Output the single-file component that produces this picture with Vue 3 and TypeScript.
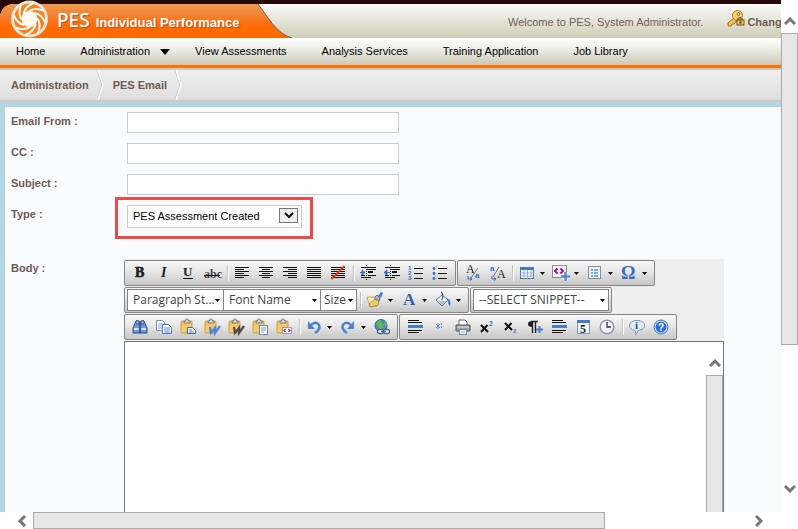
<script setup lang="ts">
import { ref } from 'vue'

interface Tool { icon?: string; label?: string; menu?: boolean; sep?: boolean }

const nav = [
  { label: 'Home' },
  { label: 'Administration', menu: true },
  { label: 'View Assessments' },
  { label: 'Analysis Services' },
  { label: 'Training Application' },
  { label: 'Job Library' },
]
const crumbs = ['Administration', 'PES Email']
const fields = [
  { id: 'from', label: 'Email From :' },
  { id: 'cc', label: 'CC :' },
  { id: 'subject', label: 'Subject :' },
]
const values = ref<Record<string, string>>({ from: '', cc: '', subject: '' })
const type = ref('PES Assessment Created')
const rays = [0, 45, 90, 135, 180, 225, 270, 315]

/* Draws a stack of horizontal rules, each given as [x, y, width]. */
const rules = (rows: number[][], fill = '#111') =>
  rows.map(([x, y, w]) => `<rect x="${x}" y="${y}" width="${w}" height="1" fill="${fill}" shape-rendering="crispEdges"/>`).join('')

const full = rules([2, 4, 6, 8, 10, 12].map(y => [1, y, 14]))
const clip = '<rect x="1" y="2" width="11" height="12" rx="1" fill="#f3c76c" stroke="#c99a45"/><path d="M4 4V2h1.500a1 1.500 0 0 1 3 0H10v2z" fill="#d8d8d8" stroke="#666" stroke-width=".8"/>'
const outline = '<path d="M6.500 0v15" stroke="#111" stroke-dasharray="1 1"/>' + rules([[1, 2, 15], [7, 4, 9], [1, 10, 4], [8, 10, 8], [1, 12, 10]]) + '<rect x="8" y="6" width="5" height="2" fill="#111"/>'
const glyph = (t: string, x: number, y: number, size: number, extra = '') =>
  `<text x="${x}" y="${y}" font-family="Liberation Serif, serif" font-size="${size}" fill="#1c1c24" ${extra}>${t}</text>`

const icons: Record<string, string> = {
  bold: glyph('B', 3, 12, 14, 'font-weight="bold" stroke="#1c1c24" stroke-width=".6"'),
  italic: glyph('I', 5, 12, 14, 'font-style="italic" font-weight="bold"'),
  underline: glyph('U', 3, 11, 13, 'font-weight="bold"') + rules([[3, 13, 10]]),
  strike: glyph('abc', 0, 13, 12, 'font-weight="bold" fill-opacity=".8"') + rules([[0, 10, 16]]),
  left: rules([[1, 2, 14], [1, 4, 9], [1, 6, 14], [1, 8, 9], [1, 10, 14], [1, 12, 9]]),
  center: rules([[1, 2, 14], [4, 4, 8], [1, 6, 14], [4, 8, 8], [1, 10, 14], [4, 12, 8]]),
  right: rules([[1, 2, 14], [6, 4, 9], [1, 6, 14], [6, 8, 9], [1, 10, 14], [6, 12, 9]]),
  justify: full,
  nojustify: full + '<path d="M1.500 14L14.500 1" stroke="#ee3311" stroke-width="1.800"/>',
  indent: outline + '<path d="M0 7.500h3M2 5l3 2.500L2 10z" fill="#3d6fc8" stroke="#3d6fc8"/>',
  outdent: outline + '<path d="M3 7.500h3M3 5L0 7.500 3 10z" fill="#3d6fc8" stroke="#3d6fc8"/>',
  numbers: rules([[6, 3, 9], [6, 8, 9], [6, 13, 9]]) + '<g font-family="Liberation Sans, sans-serif" font-size="6" font-weight="bold" fill="#3d6fc8"><text x="0" y="5">1</text><text x="0" y="10">2</text><text x="0" y="15">3</text></g>',
  bullets: rules([[6, 3, 9], [6, 8, 9], [6, 13, 9]]) + '<g fill="#3d6fc8"><circle cx="2" cy="3.500" r="1.400"/><circle cx="2" cy="8.500" r="1.400"/><circle cx="2" cy="13.500" r="1.400"/></g>',
  lower: glyph('A', 1, 8, 12) + '<text x="10" y="13" font-family="Liberation Sans, sans-serif" font-size="8" font-weight="bold" fill="#3d6fc8">a</text><path d="M13 3L6 13" stroke="#777"/><path d="M3 11v3h4M5 12.500L7 14l-2 1.500" fill="none" stroke="#3d6fc8"/>',
  upper: glyph('A', 8, 13, 12) + '<text x="1" y="6" font-family="Liberation Sans, sans-serif" font-size="8" font-weight="bold" fill="#3d6fc8">a</text><path d="M10 2L4 12" stroke="#777"/><path d="M3 11v3h4M5 12.500L7 14l-2 1.500" fill="none" stroke="#3d6fc8"/>',
  table: '<rect x="1.500" y="2.500" width="13" height="11" fill="#fff" stroke="#4c6ea8"/><rect x="1" y="2" width="14" height="3" fill="#4779c9"/><path d="M5 5v9M8.500 5v9M12 5v9M1 8h14M1 11h14" stroke="#8fb0e4"/>',
  snippet: '<rect x="-.5" y=".5" width="14" height="12" fill="#f4f4f8" stroke="#333" stroke-dasharray="1 1"/><path d="M4.500 3.500L2 6l2.500 2.500M7.500 3.500L10 6 7.500 8.500" fill="none" stroke="#a0148c" stroke-width="2"/><path d="M12.500 7v9M8 11.500h9" stroke="#fff" stroke-width="4"/><path d="M12.500 7v9M8 11.500h9" stroke="#5584d0" stroke-width="2.500"/>',
  template: '<rect x="1.500" y="1.500" width="12" height="12" fill="#eef2f9" stroke="#333" stroke-dasharray="1 1"/><path d="M4 5h2M4 8h2M4 11h2M7 5h4M7 8h4M7 11h4" stroke="#5292dc" stroke-width="1.500"/>',
  omega: '<text x="0" y="14" font-family="Liberation Serif, serif" font-size="18" font-weight="bold" fill="#3b6db5">Ω</text>',
  brush: '<path d="M0 5h7l6 2-3 7-7 1z" fill="#fff3b0" stroke="#c7a74f"/><path d="M2 12l2 3 7-2 1-5-4-1z" fill="#f4cf62" stroke="#777" stroke-width=".7"/><path d="M8 5l2-2 3 3-1 3-4-2z" fill="#a9b4c8" stroke="#59647a" stroke-width=".8"/><path d="M11 4l3-4 2 1-2 5z" fill="#4a78c8"/>',
  fore: '<text x="2" y="13" font-family="Liberation Serif, serif" font-size="17" font-weight="bold" fill="#365f9f">A</text>',
  bucket: '<path d="M1 8l6-5 6 5-6 6z" fill="#f4f7fc" stroke="#587aaa"/><path d="M6 0q3 2 1 8" fill="none" stroke="#555" stroke-width="1.200"/><path d="M3 9h9l-5 4z" fill="#a9bfdf"/><path d="M11 6q6 1 4 8-2-1-2-5z" fill="#3978cc"/>',
  find: '<path d="M4 2h3l1 4v8H1V9zM9 2h3l3 7v5H8V6z" fill="#6b9be0" stroke="#274a84"/><path d="M4 2h3v3H4zM9 2h3v3H9z" fill="#c8dcf5" stroke="#274a84"/><path d="M2 10h4.500M9.500 10H14" stroke="#dceafc" stroke-width="2"/>',
  copy: '<path d="M.5 1.500h6l2 2v8h-8z" fill="#fff" stroke="#6a91cc"/><path d="M2 5h5M2 7h5M2 9h5" stroke="#83a6dd"/><path d="M6.500 5.500h6l3 3v6h-9z" fill="#fff" stroke="#4d79bd"/><path d="M8 9h6M8 11h6M8 13h6" stroke="#5787d0"/>',
  paste: clip + '<path d="M7.500 8.500h5l3 3v3h-8z" fill="#e8f1ff" stroke="#566985"/><path d="M9 11h3M9 13h5" stroke="#6e91c8"/>',
  pasteword: clip + '<path d="M6 8l1 6 4-5 0 5 5-7" fill="none" stroke="#4f86dd" stroke-width="2.200"/>',
  pasteclean: clip + '<path d="M6 8l1 6 4-5 0 5 5-7" fill="none" stroke="#4a4a48" stroke-width="2.200"/>',
  pastetext: clip + '<rect x="7.500" y="6.500" width="8" height="9" fill="#fff" stroke="#6888ba"/><path d="M9 9h5M9 11h5M9 13h3" stroke="#7598d3"/>',
  pastehtml: clip + '<rect x="6.500" y="8.500" width="9" height="6" fill="#fff" stroke="#555" stroke-dasharray="1 1"/><path d="M9.500 10L8 11.500 9.500 13M12.500 10l1.500 1.500-1.500 1.500" fill="none" stroke="#b2209d" stroke-width="1.300"/>',
  undo: '<path d="M4 7q6-6 9-1 2 4-4 8" fill="none" stroke="#4d84d1" stroke-width="2.500"/><path d="M2 2v8h7z" fill="#4d84d1"/>',
  redo: '<path d="M12 7Q6 1 3 6q-2 4 4 8" fill="none" stroke="#4d84d1" stroke-width="2.500"/><path d="M14 2v8H7z" fill="#4d84d1"/>',
  globe: '<circle cx="7" cy="6.500" r="6" fill="#4c88cf" stroke="#346398"/><path d="M3 3q3-3 5-2l-1 3 3 2-2 4-3 1-1-4-2-1z" fill="#5fb854"/><path d="M11 2l2 3-1 3-2-2z" fill="#5fb854"/><rect x="3.500" y="10.500" width="6" height="4" rx="2" fill="#fff" stroke="#4b6078" stroke-width="1.300"/><rect x="9.500" y="10.500" width="6" height="4" rx="2" fill="#fff" stroke="#4b6078" stroke-width="1.300"/><path d="M7 12.500h5" stroke="#4b6078"/>',
  hr: rules([[1, 1, 11], [1, 3, 14], [1, 11, 14], [1, 13, 11]]) + '<rect x="1" y="6" width="15" height="3" fill="#4c7ed0"/>',
  star: '<path d="M7 4v6M5 5l4 4M9 5L5 9" stroke="#5689d8"/><path d="M10 5h1M10 8h1" stroke="#333"/>',
  print: '<path d="M4 7V1h6l2 2v4z" fill="#fff" stroke="#666"/><path d="M1 6h14v6H1z" fill="#9b9fa8" stroke="#555"/><path d="M2 8h12" stroke="#e4e7ec"/><rect x="4.500" y="10.500" width="7" height="5" fill="#fff" stroke="#6f86ad"/><path d="M6 13h4" stroke="#70a2de"/>',
  sup: '<path d="M2 6l7 7M8.500 6L2 13" stroke="#111" stroke-width="2"/><text x="10" y="7" font-family="Liberation Sans, sans-serif" font-size="7" font-weight="bold" fill="#3d6fc8">2</text>',
  sub: '<path d="M2 4l7 7M8.500 4L2 11" stroke="#111" stroke-width="2"/><text x="10" y="14" font-family="Liberation Sans, sans-serif" font-size="6" font-weight="bold" fill="#3d6fc8">2</text>',
  para: '<path d="M5 2q-4 0-4 3t4 3z" fill="#222"/><path d="M5.500 2v12M8.500 2v12M4 2.500h7" stroke="#222" stroke-width="1.400"/><path d="M12.500 7v7M9 10.500h7" stroke="#4c7ed0" stroke-width="2"/>',
  date: '<rect x="2.500" y="1.500" width="12" height="13" fill="#f3f5fa" stroke="#8198bf"/><rect x="2" y="1" width="13" height="3" fill="#4779c9"/><text x="5" y="14" font-family="Liberation Serif, serif" font-size="12" font-weight="bold" fill="#222">5</text>',
  time: '<circle cx="8" cy="8" r="6.800" fill="#eef4fd" stroke="#8e99ab" stroke-width="1.500"/><path d="M8 3v5h4" fill="none" stroke="#333" stroke-width="1.300"/>',
  info: '<path d="M8 1.500c10 0 10 9 1 10l-2 4-1-4c-8-1-7-10 2-10z" fill="#e3ecf8" stroke="#7d93b3"/><text x="6" y="10" font-family="Liberation Serif, serif" font-size="11" font-weight="bold" fill="#254f91">i</text>',
  help: '<circle cx="8" cy="8" r="7" fill="#dbe9fc" stroke="#3c70bf"/><circle cx="8" cy="8" r="5.500" fill="#2c6ed0"/><text x="5" y="12" font-family="Liberation Sans, sans-serif" font-size="10" font-weight="bold" fill="#fff">?</text>',
}

const t = (icon: string, label: string, menu = false): Tool => ({ icon, label, menu })
const sep: Tool = { sep: true }
const format: Tool[] = [
  t('bold', 'Bold'), t('italic', 'Italic'), t('underline', 'Underline'), t('strike', 'Strikethrough'), sep,
  t('left', 'Align left'), t('center', 'Align center'), t('right', 'Align right'), t('justify', 'Justify'), t('nojustify', 'Remove alignment'), sep,
  t('indent', 'Indent'), t('outdent', 'Outdent'), t('numbers', 'Numbered list'), t('bullets', 'Bullet list'),
]
const insert: Tool[] = [
  t('lower', 'Lower case'), t('upper', 'Upper case'), sep, t('table', 'Insert table', true),
  t('snippet', 'Insert code', true), t('template', 'Insert template', true), t('omega', 'Insert symbol', true),
]
const paint: Tool[] = [sep, t('brush', 'Format stripper', true), t('fore', 'Text color', true), t('bucket', 'Background color', true)]
const clipboard: Tool[] = [
  t('find', 'Find'), t('copy', 'Copy'), t('paste', 'Paste'), t('pasteword', 'Paste from Word'), t('pasteclean', 'Paste cleaned'),
  t('pastetext', 'Paste plain text'), t('pastehtml', 'Paste as HTML'), sep, t('undo', 'Undo', true), t('redo', 'Redo', true), t('globe', 'Link'),
]
const extras: Tool[] = [
  t('hr', 'Horizontal rule'), t('star', 'Special'), t('print', 'Print'), t('sup', 'Superscript'), t('sub', 'Subscript'),
  t('para', 'New paragraph'), t('hr', 'Divider'), t('date', 'Insert date'), t('time', 'Insert time'), sep, t('info', 'About'), t('help', 'Help'),
]
interface Pick { label: string; text: string; size: string }
interface Group { picks?: Pick[]; tools?: Tool[] }
const toolbar: Group[][] = [
  [{ tools: format }, { tools: insert }],
  [
    { picks: [{ label: 'Paragraph style', text: 'Paragraph St...', size: 'wide' }, { label: 'Font name', text: 'Font Name', size: 'wide' }, { label: 'Font size', text: 'Size', size: 'narrow' }], tools: paint },
    { picks: [{ label: 'Snippet', text: '--SELECT SNIPPET--', size: 'long' }] },
  ],
  [{ tools: clipboard }, { tools: extras }],
]
</script>

<template>
  <div class="window">
    <div class="page">
      <header class="banner">
        <div class="brand">
          <svg class="brand-shape" width="292" height="38" viewBox="0 0 292 38" aria-hidden="true">
            <defs>
              <linearGradient id="tab" x1="0" y1="0" x2="0" y2="1">
                <stop offset="0" stop-color="#ee9c50" /><stop offset=".3" stop-color="#f38436" /><stop offset=".65" stop-color="#ff6a05" /><stop offset="1" stop-color="#ff6a00" />
              </linearGradient>
            </defs>
            <path d="M0 4H12Q3 6 0 15z" fill="#260808" />
            <path d="M0 38V15Q3 4 13 4H258C267 15 276 34 292 38z" fill="url(#tab)" />
            <path d="M258 4C267 15 276 34 292 38" fill="none" stroke="#77573b" />
            <circle cx="29.500" cy="19" r="18.500" fill="#e9e5d8" />
            <circle cx="29.500" cy="19" r="15.500" fill="#f5821e" />
            <g transform="translate(29.500 19)">
              <circle r="8" fill="#fffaf2" />
              <path v-for="a in rays" :key="a" :transform="`rotate(${a})`" d="M-6 -5Q-5 -12 4 -16" fill="none" stroke="#fffaf2" stroke-width="2" />
            </g>
          </svg>
          <h1><span class="brand-pes">PES</span> Individual Performance</h1>
        </div>
        <p class="welcome">Welcome to PES, System Administrator.</p>
        <a class="change" href="#">
          <svg width="18" height="18" viewBox="0 0 18 18" aria-hidden="true">
            <path d="M7 8L1 13v3h3l1-2h2l3-4" fill="#f7c657" stroke="#a96819" />
            <circle cx="10.500" cy="5.500" r="5" fill="#fbd06a" stroke="#b87520" /><circle cx="11.500" cy="4" r="1.500" fill="#fff" stroke="#b87520" />
            <path d="M11 10V9q2-3 4 0v1" fill="none" stroke="#666" stroke-width="1.500" />
            <rect x="10" y="10" width="7" height="5" fill="#f6c84c" stroke="#6b4c18" /><rect x="12.500" y="11.500" width="2" height="2" fill="#453316" />
          </svg>
          Chang
        </a>
      </header>

      <nav class="menu" aria-label="Main">
        <a v-for="n in nav" :key="n.label" href="#" :class="{ parent: n.menu }">
          {{ n.label }}
          <svg v-if="n.menu" width="10" height="6" viewBox="0 0 10 6" aria-hidden="true"><path d="M0 0h10L5 6z" /></svg>
        </a>
      </nav>

      <nav class="crumbs" aria-label="Breadcrumb">
        <template v-for="c in crumbs" :key="c">
          <a href="#">{{ c }}</a>
          <svg width="8" height="30" viewBox="0 0 8 30" aria-hidden="true">
            <path d="M0 0l5 15-5 15" fill="none" stroke="#c4c4c4" /><path d="M1 0l5 15-5 15" fill="none" stroke="#fff" stroke-width="1.500" />
          </svg>
        </template>
      </nav>

      <main class="content">
        <form class="form" @submit.prevent>
          <div v-for="f in fields" :key="f.id" class="row">
            <label :for="f.id">{{ f.label }}</label>
            <input :id="f.id" v-model="values[f.id]" type="text">
          </div>
          <div class="row">
            <label for="type">Type :</label>
            <div class="type">
              <select id="type" v-model="type"><option>PES Assessment Created</option></select>
              <span class="type-arrow"><svg width="10" height="7" viewBox="0 0 10 7" aria-hidden="true"><path d="M1 1l4 4 4-4" fill="none" stroke="#111" stroke-width="2" /></svg></span>
              <span class="highlight"></span>
            </div>
          </div>
          <div class="body-row">
            <label for="body">Body :</label>
            <div class="editor">
              <div class="toolbar">
                <div v-for="(line, i) in toolbar" :key="i" class="line">
                  <div v-for="(g, j) in line" :key="j" class="group" :class="{ picks: g.picks }">
                    <div v-for="p in g.picks" :key="p.text" class="pick" :class="p.size">
                      <select :aria-label="p.label"><option>{{ p.text }}</option></select>
                      <svg class="caret" width="5" height="3" viewBox="0 0 5 3" aria-hidden="true"><path d="M0 0h5L2.500 3z" /></svg>
                    </div>
                    <template v-for="(tool, k) in g.tools" :key="k">
                      <span v-if="tool.sep" class="sep"></span>
                      <button v-else type="button" :class="{ split: tool.menu }" :aria-label="tool.label">
                        <svg class="glyph" width="16" height="16" viewBox="0 0 16 16" aria-hidden="true" v-html="icons[tool.icon!]"></svg>
                        <svg v-if="tool.menu" width="5" height="3" viewBox="0 0 5 3" aria-hidden="true"><path d="M0 0h5L2.500 3z" /></svg>
                      </button>
                    </template>
                  </div>
                </div>
              </div>
              <div class="canvas">
                <textarea id="body"></textarea>
                <div class="inner-bar">
                  <svg width="12" height="9" viewBox="0 0 12 9" aria-hidden="true"><path d="M1 8l5-5 5 5" /></svg>
                  <span class="inner-thumb"></span>
                </div>
              </div>
            </div>
          </div>
        </form>
      </main>
    </div>

    <div class="bar vertical">
      <span class="end"><svg width="12" height="9" viewBox="0 0 12 9" aria-hidden="true"><path d="M1 8l5-5 5 5" /></svg></span>
      <span class="track"><span class="thumb"></span></span>
      <span class="end"><svg width="12" height="9" viewBox="0 0 12 9" aria-hidden="true"><path d="M1 1l5 5 5-5" /></svg></span>
    </div>
    <div class="bar horizontal">
      <span class="end"><svg width="9" height="12" viewBox="0 0 9 12" aria-hidden="true"><path d="M8 1L3 6l5 5" /></svg></span>
      <span class="track"><span class="thumb"></span></span>
      <span class="end"><svg width="9" height="12" viewBox="0 0 9 12" aria-hidden="true"><path d="M1 1l5 5-5 5" /></svg></span>
    </div>
  </div>
</template>

<style>
body { margin: 0; background: #fff; }
</style>

<style scoped>
* { box-sizing: border-box; }
svg { display: block; flex: none; }
a { color: inherit; text-decoration: none; }
.window {
  display: grid;
  grid-template: minmax(0, 1fr) 17px / minmax(0, 1fr) 17px;
  height: 100vh;
  font: 11px/14px "Liberation Sans", Arial, sans-serif;
  color: #000;
}
.page { display: flex; flex-direction: column; min-height: 0; overflow: hidden; }

.banner {
  display: flex;
  flex: none;
  height: 38px;
  border-top: 4px solid #260808;
  background: linear-gradient(#fbfbf8, #cfcdb9);
  color: #6e5f57;
  white-space: nowrap;
}
.brand { display: grid; flex: none; margin-top: -4px; }
.brand-shape, .brand h1 { grid-area: 1 / 1; }
.brand h1 {
  display: flex;
  align-items: baseline;
  gap: 6px;
  margin: 0;
  padding: 8px 0 0 57px;
  font-size: 13px;
  line-height: 24px;
  color: #fff;
  text-shadow: 1px 1px 1px #b85218;
}
.brand-pes { font: 500 19px/24px "Noto Sans", sans-serif; }
.welcome { flex: none; margin: 0; padding: 11px 24px 0 216px; }
.change { display: flex; flex: none; gap: 2px; font-weight: bold; line-height: 36px; }
.change svg { margin-top: 6px; }

.menu {
  display: flex;
  flex: none;
  gap: 35px;
  height: 30px;
  padding-left: 16px;
  border-bottom: 3px solid #ff7300;
  background: linear-gradient(#fff, #eeeee8 40%, #cbc8b7);
  line-height: 27px;
  white-space: nowrap;
}
.menu .parent { display: flex; align-items: center; gap: 10px; margin-right: -10px; }

.crumbs {
  display: flex;
  flex: none;
  gap: 8px;
  height: 34px;
  padding-left: 11px;
  border: solid #ccc9c8;
  border-width: 2px 0;
  background: linear-gradient(#efefef, #dedede);
  color: #6e5b55;
  font-weight: bold;
  line-height: 31px;
}

.content {
  display: flex;
  flex: 1;
  min-height: 0;
  border: solid #b2d6e4;
  border-width: 5px 0 0 5px;
  background: #fafbfd;
}
.form { display: flex; flex: 1; flex-direction: column; gap: 10px; min-width: 0; padding: 5px 0 0 6px; }
label { color: #6e5b55; font-weight: bold; line-height: 18px; }
.row { display: grid; grid-template-columns: 116px 1fr; flex: none; align-items: start; }
.row input { width: 272px; height: 21px; padding: 0 5px; border: 1px solid #c6cfd8; background: #fff; font: inherit; }
.type { position: relative; display: flex; width: 175px; }
.type select {
  width: 100%;
  height: 23px;
  padding: 0 28px 2px 5px;
  appearance: none;
  border: 1px solid #c6cfd8;
  border-radius: 0;
  background: #fff;
  color: #000;
  font: inherit;
}
.type-arrow {
  position: absolute;
  top: 3px;
  right: 4px;
  display: grid;
  place-items: center;
  width: 19px;
  height: 15px;
  border: 1px solid #777;
  background: #efefef;
  pointer-events: none;
}
.highlight { position: absolute; inset: -8px -11px -11px -12px; border: 3px solid #ec4a47; pointer-events: none; }

.body-row { display: grid; grid-template-columns: 113px 600px; flex: 1; min-height: 0; margin-top: 21px; }
.editor { display: flex; flex-direction: column; min-height: 0; background: #eee; }
.toolbar { display: flex; flex: none; flex-direction: column; gap: 1px; padding: 1px 0; }
.line { display: flex; gap: 1px; }
.group {
  display: flex;
  height: 26px;
  padding: 0 3px;
  border: 1px solid #858585;
  border-radius: 2px;
  background: linear-gradient(#f8f8f8, #e6e6e6 45%, #c6c6c6);
}
.group.picks { padding-left: 2px; }
.group.picks:last-child { padding-right: 2px; }
.group button {
  display: flex;
  align-items: center;
  justify-content: center;
  width: 24px;
  padding: 0;
  border: 0;
  background: none;
}
.group .split { gap: 5px; width: 34px; }
.glyph { overflow: visible; }
.sep { width: 2px; margin: 4px 1px 4px 3px; border: solid; border-color: #fff #fff #fff #c2c2c2; border-width: 0 1px; }
.pick { display: flex; align-items: center; height: 22px; margin-top: 1px; border: 1px solid #858585; background: #fff; }
.pick + .pick { border-left-width: 0; }
.pick select {
  flex: 1;
  min-width: 0;
  height: 20px;
  padding: 0 0 0 5px;
  appearance: none;
  border: 0;
  background: none;
  color: #444;
  font: 12px/20px "Open Sans", sans-serif;
}
.pick .caret { margin-right: 3px; }
.wide { width: 97px; }
.narrow { width: 36px; }
.narrow select { padding-left: 3px; }
.long { width: 136px; }

.canvas { display: flex; flex: 1; min-height: 0; border: solid #777; border-width: 1px 1px 0; background: #fff; }
.canvas textarea { flex: 1; min-width: 0; padding: 8px; border: 0; resize: none; overflow: hidden; font: inherit; }
.inner-bar { display: flex; flex-direction: column; align-items: center; width: 17px; padding-top: 16px; }
.inner-thumb { flex: 1; width: 100%; margin-top: 8px; border: 1px solid #aaa; border-bottom: 0; background: #e7e7e7; }
.inner-bar path, .bar path { fill: none; stroke: #777; stroke-width: 3; }

.bar { display: flex; background: #fff; }
.bar .end { display: flex; align-items: center; justify-content: center; flex: none; }
.vertical { flex-direction: column; }
.vertical .end { height: 33px; }
.vertical .end:first-child { padding-top: 8px; }
.vertical .end:last-child { padding-bottom: 12px; }
.horizontal .end { width: 33px; }
.horizontal .end:first-child { padding-left: 9px; }
.horizontal .end:last-child { padding-right: 10px; }
.track { display: flex; flex: 1; }
.thumb { border: 1px solid #aaa; background: #e7e7e7; }
.vertical .thumb { width: 100%; height: 70%; }
.horizontal .thumb { width: 80%; }
</style>
